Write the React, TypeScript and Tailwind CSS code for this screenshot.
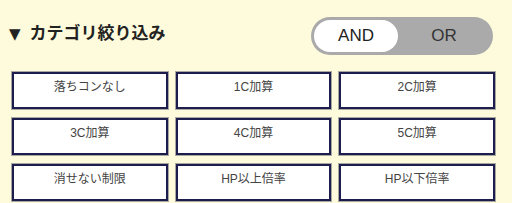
import { useState } from 'react'

const categories = [
  '落ちコンなし',
  '1C加算',
  '2C加算',
  '3C加算',
  '4C加算',
  '5C加算',
  '消せない制限',
  'HP以上倍率',
  'HP以下倍率',
]

export default function App() {
  const [mode, setMode] = useState<'AND' | 'OR'>('AND')

  return (
    <div className="h-[203px] w-[512px] overflow-hidden bg-[#fdfbdc] font-['Liberation_Sans','Noto_Sans_CJK_JP',sans-serif]">
      <div className="flex items-center justify-between pl-[9px] pr-[19px] pt-[17px]">
        <h2 className="flex h-[38px] items-center gap-[9px] pb-[4px] text-[17px] font-bold text-[#222]">
          <span className="font-['DejaVu_Sans',sans-serif] text-[15px]">▼</span>
          <span>カテゴリ絞り込み</span>
        </h2>
        <div className="flex h-[38px] w-[182px] items-center rounded-full bg-[#aaaaaa] p-[3px]">
          {(['AND', 'OR'] as const).map((m) => (
            <button
              key={m}
              type="button"
              onClick={() => setMode(m)}
              className={
                mode === m
                  ? 'flex h-[32px] w-[84px] items-center justify-center rounded-full bg-white text-[17px] text-[#222]'
                  : 'flex h-[32px] flex-1 items-center justify-center rounded-full text-[17px] text-[#333]'
              }
            >
              {m}
            </button>
          ))}
        </div>
      </div>

      <div className="mt-[17px] grid grid-cols-3 gap-x-[8px] gap-y-[9px] pl-[12px] pr-[17px]">
        {categories.map((c) => (
          <button
            key={c}
            type="button"
            className="flex h-[37px] items-start justify-center border-2 border-[#1e1e4e] bg-white pt-[4px] text-[12px] text-[#444] shadow-[0_0_0_1px_#a8a8a0]"
          >
            {c}
          </button>
        ))}
      </div>
    </div>
  )
}
